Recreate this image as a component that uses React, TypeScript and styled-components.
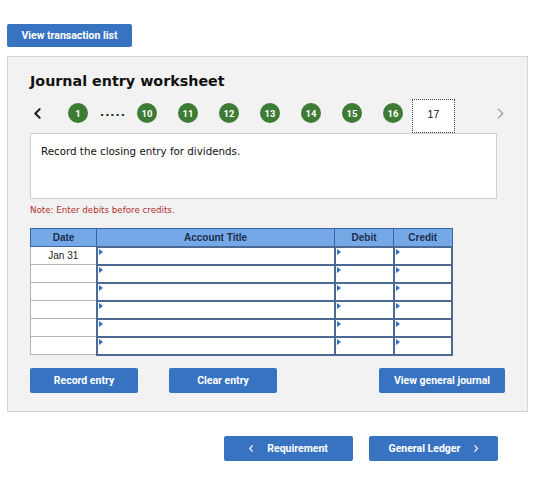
import React from 'react';
import styled, { createGlobalStyle } from 'styled-components';

const GlobalStyle = createGlobalStyle`
    body {
        margin: 0;
        background: #ffffff;
        font-family: "DejaVu Sans", Verdana, sans-serif;
    }
`

const Page = styled.div`
    width: 521px;
    padding: 24px 0 0 7px;
`

const Button = styled.button<{ w: number }>`
    width: ${(props) => props.w}px;
    height: 25px;
    border: none;
    border-radius: 2px;
    background: #3773c0;
    color: #ffffff;
    font-family: Roboto, "Liberation Sans", sans-serif;
    font-weight: 700;
    font-size: 10.5px;
    padding: 0;
    display: flex;
    align-items: center;
    justify-content: center;
    gap: 14px;
`

const TopButton = styled(Button)`
    height: 23px;
`

const Panel = styled.div`
    margin-top: 9px;
    background: #f2f2f2;
    border: 1px solid #d4d4d4;
    padding: 15px 22px 18px 22px;
`

const Title = styled.h2`
    margin: 0;
    font-size: 14.3px;
    line-height: 18px;
    font-weight: 700;
    color: #111;
`

const Pager = styled.div`
    display: flex;
    align-items: flex-start;
    height: 34px;
    margin-top: 9px;
`

const ArrowIcon = styled.svg<{ gap: number }>`
    margin-top: 9px;
    margin-left: ${(props) => props.gap}px;
    flex: none;
`

const Dot = styled.span<{ gap: number }>`
    width: 20px;
    height: 20px;
    border-radius: 50%;
    background: #3e7b34;
    color: #fff;
    font-family: Roboto, "Liberation Sans", sans-serif;
    font-size: 9.5px;
    font-weight: 700;
    margin-top: 4px;
    margin-left: ${(props) => props.gap}px;
    display: flex;
    align-items: center;
    justify-content: center;
`

const Ellipsis = styled.span`
    margin: 4px 0 0 12px;
    font-size: 11px;
    font-weight: 700;
    letter-spacing: 1px;
    line-height: 20px;
    color: #222;
`

const Current = styled.span`
    width: 43px;
    height: 34px;
    box-sizing: border-box;
    margin-left: 9px;
    border: 1px dotted #34496b;
    background: #fff;
    padding-top: 6px;
    font-family: "Liberation Sans", sans-serif;
    font-size: 10.5px;
    line-height: 16px;
    text-align: center;
    color: #111;
`

const Prompt = styled.div`
    width: 467px;
    height: 66px;
    box-sizing: border-box;
    background: #fff;
    border: 1px solid #cfcfcf;
    padding: 10px 10px;
    font-size: 10.3px;
    line-height: 14px;
    color: #111;
`

const Note = styled.p`
    margin: 5px 0 0;
    font-size: 8.7px;
    line-height: 12px;
    color: #b0302b;
`

const Table = styled.table`
    margin-top: 12px;
    border-collapse: collapse;
    table-layout: fixed;
    width: 423px;
    font-family: "Liberation Sans", Arial, sans-serif;
    font-size: 10px;
`

const Row = styled.tr`
    height: 18px;
`

const Head = styled.th`
    padding: 0;
    background: #75a8e6;
    border: 1px solid #3d659c;
    color: #1d2f4d;
    font-weight: 700;
`

const DateCell = styled.td`
    padding: 0;
    background: #fff;
    border: 1px solid #b4b4b4;
    text-align: center;
    color: #222;
`

const InputCell = styled.td`
    position: relative;
    padding: 0;
    background: #fff;
    border: 2px solid #4c6a93;
    &::before {
        content: '';
        position: absolute;
        left: 1px;
        top: 1px;
        border-top: 3px solid transparent;
        border-bottom: 3px solid transparent;
        border-left: 4px solid #2f6dc0;
    }
`

const Actions = styled.div`
    display: flex;
    justify-content: space-between;
    margin-top: 12px;
`

const ActionGroup = styled.div`
    display: flex;
    gap: 31px;
`

const Nav = styled.div`
    display: flex;
    justify-content: flex-end;
    gap: 16px;
    margin: 24px 30px 0 0;
`

const Chevron = ({ dir, color = '#fff', size = 7, stroke = 1.6 }: { dir: 'left' | 'right', color?: string, size?: number, stroke?: number }) => (
    <svg width={size * 0.6} height={size} viewBox="0 0 6 10">
        <path
            d={dir === 'left' ? 'M5 1 L1 5 L5 9' : 'M1 1 L5 5 L1 9'}
            fill="none"
            stroke={color}
            strokeWidth={stroke}
            strokeLinecap="round"
            strokeLinejoin="round"
        />
    </svg>
);

const steps = [10, 11, 12, 13, 14, 15, 16];
const rows = ['Jan 31', '', '', '', '', ''];

const App = () => {
    return (
        <>
            <GlobalStyle />
            <Page>
                <TopButton w={125}>View transaction list</TopButton>
                <Panel>
                    <Title>Journal entry worksheet</Title>
                    <Pager>
                        <ArrowIcon gap={4} width="7" height="11" viewBox="0 0 6 10">
                            <path d="M5 1 L1 5 L5 9" fill="none" stroke="#1a1a1a" strokeWidth="1.8" strokeLinecap="round" strokeLinejoin="round" />
                        </ArrowIcon>
                        <Dot gap={27}>1</Dot>
                        <Ellipsis>.....</Ellipsis>
                        {steps.map((s, i) => (
                            <Dot key={s} gap={i === 0 ? 11 : 21}>{s}</Dot>
                        ))}
                        <Current>17</Current>
                        <ArrowIcon gap={42} width="7" height="11" viewBox="0 0 6 10">
                            <path d="M1 1 L5 5 L1 9" fill="none" stroke="#9c9c9c" strokeWidth="1.2" strokeLinecap="round" strokeLinejoin="round" />
                        </ArrowIcon>
                    </Pager>
                    <Prompt>Record the closing entry for dividends.</Prompt>
                    <Note>Note: Enter debits before credits.</Note>
                    <Table>
                        <colgroup>
                            <col style={{ width: 66 }} />
                            <col style={{ width: 238 }} />
                            <col style={{ width: 59 }} />
                            <col />
                        </colgroup>
                        <thead>
                            <Row>
                                <Head>Date</Head>
                                <Head>Account Title</Head>
                                <Head>Debit</Head>
                                <Head>Credit</Head>
                            </Row>
                        </thead>
                        <tbody>
                            {rows.map((d, i) => (
                                <Row key={i}>
                                    <DateCell>{d}</DateCell>
                                    <InputCell />
                                    <InputCell />
                                    <InputCell />
                                </Row>
                            ))}
                        </tbody>
                    </Table>
                    <Actions>
                        <ActionGroup>
                            <Button w={108}>Record entry</Button>
                            <Button w={108}>Clear entry</Button>
                        </ActionGroup>
                        <Button w={126}>View general journal</Button>
                    </Actions>
                </Panel>
                <Nav>
                    <Button w={129}><Chevron dir="left" />Requirement</Button>
                    <Button w={129}>General Ledger<Chevron dir="right" /></Button>
                </Nav>
            </Page>
        </>
    );
};

export default App;
